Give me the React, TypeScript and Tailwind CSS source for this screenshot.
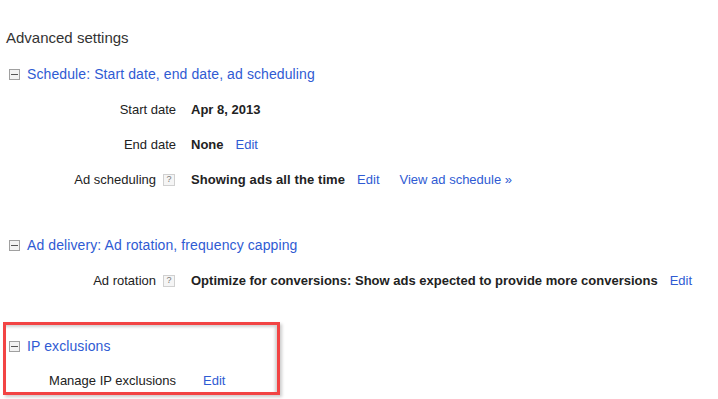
const LINK = "text-[#2f5bd3]";

const Toggle = () => (
  <span className="flex h-[11px] w-[11px] items-center justify-center border border-[#a0a0a0] bg-[#f2f2f2]">
    <span className="h-px w-[7px] bg-[#555]" />
  </span>
);

const Help = () => (
  <span className="mr-px flex h-[12px] w-[12px] items-center justify-center border border-[#d0d0d0] bg-[#f5f5f5] text-[9px] leading-none text-[#777]">
    ?
  </span>
);

const Heading = ({ text }: { text: string }) => (
  <div className="flex h-[20px] items-center gap-[7px] pl-[9px]">
    <Toggle />
    <span className={`text-[14px] tracking-[0.1px] ${LINK}`}>{text}</span>
  </div>
);

const Row = ({
  label,
  help,
  children,
}: {
  label: string;
  help?: boolean;
  children: React.ReactNode;
}) => (
  <div className="flex h-[35px] items-center">
    <div className="flex w-[176px] items-center justify-end gap-[7px]">
      <span>{label}</span>
      {help && <Help />}
    </div>
    <div className="ml-[15px] flex items-center">{children}</div>
  </div>
);

export default function App() {
  return (
    <div className="h-[399px] w-[718px] overflow-hidden bg-white font-['Liberation_Sans',Arial,sans-serif] text-[13px] text-[#222]">
      <div className="pl-[6px] pt-[29px] text-[15px] leading-[18px] text-[#333]">Advanced settings</div>

      <div className="mt-[17px]">
        <Heading text="Schedule: Start date, end date, ad scheduling" />
        <div className="mt-[8px]">
          <Row label="Start date">
            <span className="font-bold">Apr 8, 2013</span>
          </Row>
          <Row label="End date">
            <span className="font-bold">None</span>
            <span className={`ml-[12px] ${LINK}`}>Edit</span>
          </Row>
          <Row label="Ad scheduling" help>
            <span className="font-bold tracking-[0.1px]">Showing ads all the time</span>
            <span className={`ml-[12px] ${LINK}`}>Edit</span>
            <span className={`ml-[20px] ${LINK}`}>View ad schedule »</span>
          </Row>
        </div>
      </div>

      <div className="mt-[38px]">
        <Heading text="Ad delivery: Ad rotation, frequency capping" />
        <div className="mt-[8px]">
          <Row label="Ad rotation" help>
            <span className="font-bold">Optimize for conversions: Show ads expected to provide more conversions</span>
            <span className={`ml-[12px] ${LINK}`}>Edit</span>
          </Row>
        </div>
      </div>

      <div className="ml-[3px] mt-[24px] h-[73px] w-[277px] border-[3px] border-[#f24444] pt-[11px] shadow-[2px_2px_3px_rgba(0,0,0,0.2),inset_-2px_2px_3px_rgba(0,0,0,0.18)]">
        <div className="-ml-[6px]">
          <Heading text="IP exclusions" />
          <div className="mt-[15px] flex h-[20px] items-center">
            <div className="w-[176px] text-right">Manage IP exclusions</div>
            <span className={`ml-[27px] ${LINK}`}>Edit</span>
          </div>
        </div>
      </div>
    </div>
  );
}
